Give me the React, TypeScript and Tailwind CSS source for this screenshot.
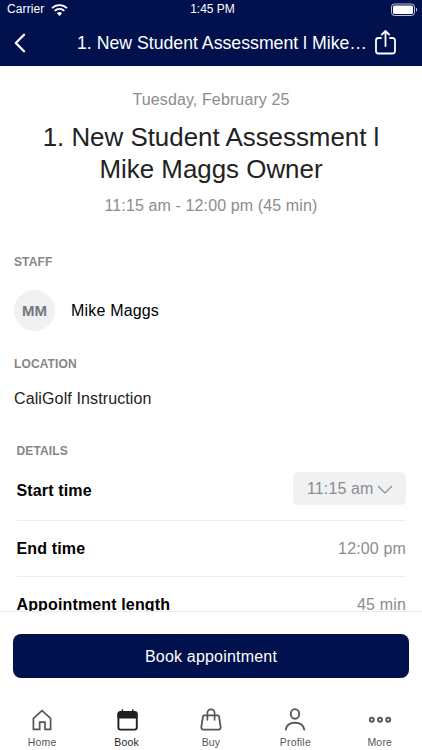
import React, { ReactNode } from 'react'

interface TabProps {
  label: string
  active?: boolean
  children: ReactNode
}

function Tab({ label, active, children }: TabProps) {
  return (
    <button className={active ? 'flex w-[84.4px] flex-col items-center text-[#1e1f24]' : 'flex w-[84.4px] flex-col items-center text-[#55565c]'}>
      <svg width="28" height="26" viewBox="0 0 28 26" fill="none" stroke="currentColor" strokeWidth="1.9" strokeLinecap="round" strokeLinejoin="round">
        {children}
      </svg>
      <span className="mt-[3px] text-[10.5px] leading-[13px] tracking-[0.2px]">{label}</span>
    </button>
  )
}

interface RowProps {
  label: string
  children: ReactNode
}

function DetailRow({ label, children }: RowProps) {
  return (
    <div className="flex h-14 shrink-0 items-center justify-between border-t border-[#ededee]">
      <span className="text-[16px] font-bold tracking-[0.14px] text-black">{label}</span>
      <span className="text-[16px] tracking-[0.15px] text-[#8c8c8c]">{children}</span>
    </div>
  )
}

function SectionTitle({ children }: { children: ReactNode }) {
  return <h3 className="text-[12px] leading-4 font-bold tracking-[0.12px] text-[#85868a]">{children}</h3>
}

function StatusBar() {
  return (
    <div className="flex h-[19px] items-center justify-between pr-1 pl-[7px] text-white">
      <div className="flex w-[120px] items-center gap-[7px]">
        <span className="text-[12px] leading-[19px] tracking-[0.1px]">Carrier</span>
        <svg width="17" height="12" viewBox="0 0 17 12" fill="none" stroke="currentColor" strokeWidth="1.9">
          <path d="M1 4.2a10.6 10.6 0 0 1 15 0" />
          <path d="M3.7 6.9a6.8 6.8 0 0 1 9.6 0" />
          <path d="M8.5 12 5.9 9.3a3.7 3.7 0 0 1 5.2 0z" fill="currentColor" stroke="none" />
        </svg>
      </div>
      <span className="mr-[5px] text-[12px] leading-[19px]">1:45 PM</span>
      <div className="flex w-[115px] justify-end">
        <svg width="28" height="14" viewBox="0 0 28 14" fill="none">
          <rect x="1.5" y="1" width="23" height="11.5" rx="3" stroke="#fff" strokeOpacity="0.75" />
          <rect x="3" y="2.5" width="20" height="8.5" rx="1.6" fill="#fff" />
          <path d="M26 4.8v4c1.6-.6 1.6-3.4 0-4z" fill="#fff" fillOpacity="0.75" />
        </svg>
      </div>
    </div>
  )
}

export default function App() {
  return (
    <div className="flex h-[750px] w-[422px] flex-col overflow-hidden bg-white font-['Liberation_Sans',Arial,sans-serif]">
      <header className="h-[66px] shrink-0 bg-[#00114d]">
        <StatusBar />
        <div className="flex h-[47px] items-center pr-6 pl-[12.5px] text-white">
          <svg width="14" height="20" viewBox="0 0 14 20" fill="none" stroke="currentColor" strokeWidth="2.3" strokeLinecap="round" strokeLinejoin="round">
            <path d="M11 1.8 2.8 10l8.2 8.2" />
          </svg>
          <h1 className="ml-[50.5px] w-[290px] text-[17.7px] leading-[22px] whitespace-nowrap">1. New Student Assessment l Mike…</h1>
          <svg className="mb-0.5 ml-[7px] shrink-0" width="24" height="28" viewBox="0 0 24 28" fill="none" stroke="currentColor" strokeWidth="1.8" strokeLinecap="round" strokeLinejoin="round">
            <path d="M7 10H4.5A2.5 2.5 0 0 0 2 12.500v10.500a2.500 2.500 0 0 0 2.500 2.500h14a2.500 2.500 0 0 0 2.500-2.500v-10.500a2.500 2.500 0 0 0-2.500-2.500H16" />
            <path d="M11.5 18V3M7.8 6.6 11.5 3l3.7 3.6" />
          </svg>
        </div>
      </header>

      <main className="flex h-[545px] shrink-0 flex-col overflow-hidden">
        <section className="mt-6 text-center">
          <p className="text-[16px] leading-5 tracking-[0.12px] text-[#8c8c8c]">Tuesday, February 25</p>
          <h2 className="mt-[11px] text-[25.9px] leading-8 text-[#222]">
            1. New Student Assessment l
            <br />
            Mike Maggs Owner
          </h2>
          <p className="mt-[11px] text-[16px] leading-5 tracking-[0.12px] text-[#8c8c8c]">11:15 am - 12:00 pm (45 min)</p>
        </section>

        <section className="mt-[38px] px-[14px]">
          <SectionTitle>STAFF</SectionTitle>
          <div className="mt-5 flex items-center">
            <div className="flex size-[41px] items-center justify-center rounded-full bg-[#f0f1f3] pt-px text-[15px] font-bold text-[#74777e]">MM</div>
            <span className="ml-4 text-[16px] tracking-[0.18px] text-black">Mike Maggs</span>
          </div>
          <div className="mt-[25px]">
            <SectionTitle>LOCATION</SectionTitle>
          </div>
          <p className="mt-[17px] text-[16px] leading-5 tracking-[0.12px] text-[#222]">CaliGolf Instruction</p>
        </section>

        <section className="mt-[34px] mr-4 ml-[16.5px] flex flex-col">
          <SectionTitle>DETAILS</SectionTitle>
          <div className="mt-[13px] mb-[15px] flex items-center justify-between">
            <span className="mt-[4px] text-[16px] font-bold tracking-[0.14px] text-black">Start time</span>
            <button className="flex h-[33px] w-[113px] items-center rounded-[5px] bg-[#f0f1f3] pl-[14px] text-[16px] tracking-[0.12px] text-[#8c8c8c]">
              11:15 am
              <svg className="mt-0.5 ml-1" width="16" height="10" viewBox="0 0 16 10" fill="none" stroke="currentColor" strokeWidth="1.2" strokeLinecap="round">
                <path d="m1.5 1.5 6.5 6.5 6.5-6.5" />
              </svg>
            </button>
          </div>
          <DetailRow label="End time">12:00 pm</DetailRow>
          <DetailRow label="Appointment length">45 min</DetailRow>
        </section>
      </main>

      <div className="shrink-0 border-t border-[#ebebed] px-[13px] pt-[22px]">
        <button className="h-[44px] w-full rounded-lg bg-[#00114d] pt-px text-[16px] tracking-[0.2px] text-white">Book appointment</button>
      </div>

      <nav className="mt-[29px] flex">
        <Tab label="Home">
          <path d="M5.4 11.4 14 3.6l8.600 7.800v10.900h-5.600v-7.200h-5.300v7.200H5.400z" strokeWidth="1.7" strokeLinejoin="miter" />
        </Tab>
        <Tab label="Book" active>
          <rect x="5.4" y="5" width="18.4" height="17.6" rx="2" />
          <path d="M5.4 6h18.4v5H5.4z" fill="currentColor" strokeWidth="1" />
          <path d="M9.4 3v2M19.8 3v2" strokeWidth="1.6" />
        </Tab>
        <Tab label="Buy">
          <path d="M7.2 8.4h13.6a1.2 1.2 0 0 1 1.2 1l1.7 10.6a2.2 2.2 0 0 1-2.2 2.6h-15a2.2 2.2 0 0 1-2.2-2.6L6 9.4a1.2 1.2 0 0 1 1.2-1z" strokeWidth="1.8" />
          <path d="M10.4 12.8V6a3.6 3.6 0 0 1 7.2 0v6.8" strokeWidth="1.7" />
        </Tab>
        <Tab label="Profile">
          <ellipse cx="14" cy="6.9" rx="4.2" ry="4.8" />
          <path d="M4.8 22.6c.7-4.4 4.2-6.8 9.2-6.8s8.500 2.400 9.200 6.800" />
        </Tab>
        <Tab label="More">
          <circle cx="5.8" cy="12.7" r="2" />
          <circle cx="14" cy="12.7" r="2" />
          <circle cx="22.2" cy="12.7" r="2" />
        </Tab>
      </nav>
    </div>
  )
}
